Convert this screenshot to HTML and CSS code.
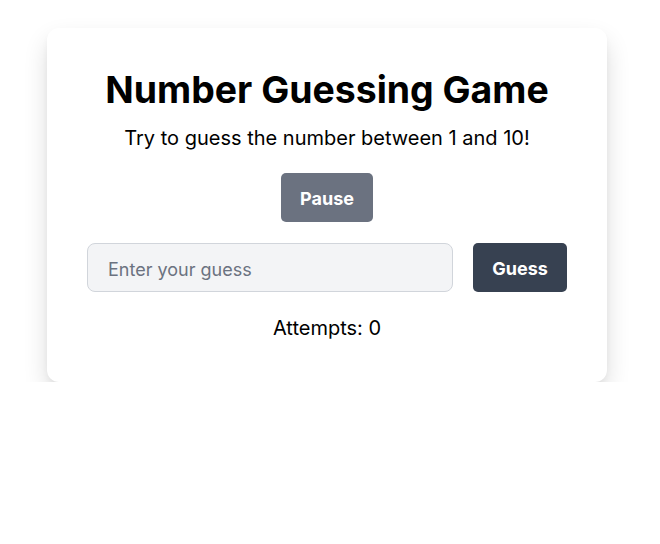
FILE: index.html
```html
<!DOCTYPE html>
<html lang="en">
<head>
<meta charset="utf-8">
<title>Number Guessing Game</title>
<link rel="stylesheet" href="styles.css">
</head>
<body>
  <main class="card">
    <h1 class="title">Number Guessing Game</h1>
    <p class="subtitle">Try to guess the number between 1 and 10!</p>
    <button class="btn btn-pause" type="button">Pause</button>
    <div class="row">
      <input class="guess-input" type="number" placeholder="Enter your guess">
      <button class="btn btn-guess" type="button">Guess</button>
    </div>
    <p class="attempts">Attempts: 0</p>
  </main>
</body>
</html>
```
FILE: styles.css
```css
* { box-sizing: border-box; }
html, body { margin: 0; padding: 0; background: #ffffff; }
body {
  font-family: Inter, "Noto Sans", "Liberation Sans", sans-serif;
  color: #000;
  padding-top: 28px;
}
.card {
  width: 560px;
  margin-left: 47px;
  background: #fff;
  border-radius: 12px;
  padding: 40px;
  box-shadow: 0 12px 26px -2px rgba(0,0,0,0.16), 0 4px 10px -4px rgba(0,0,0,0.1);
  display: flex;
  flex-direction: column;
  align-items: center;
}
.title {
  margin: 2px 0 14px;
  font-size: 37.4px;
  line-height: 40px;
  font-weight: 700;
  letter-spacing: 0;
}
.subtitle {
  margin: 0 0 21px;
  font-size: 20px;
  line-height: 28px;
}
.btn {
  font-family: inherit;
  font-weight: 700;
  font-size: 18px;
  line-height: 25px;
  color: #fff;
  border: none;
  border-radius: 5px;
  padding: 13px 0 11px;
  cursor: pointer;
  text-align: center;
}
.btn-pause {
  background: #6b7280;
  margin-bottom: 21px;
  width: 92px;
}
.row {
  display: flex;
  gap: 20px;
  width: 100%;
}
.guess-input {
  flex: 1;
  height: 49px;
  font-family: inherit;
  font-size: 18px;
  padding: 3px 20px 0;
  background: #f3f4f6;
  border: 1px solid #d1d5db;
  border-radius: 8px;
  color: #111827;
  outline: none;
}
.guess-input::placeholder { color: #6b7280; }
.guess-input::-webkit-outer-spin-button,
.guess-input::-webkit-inner-spin-button { -webkit-appearance: none; margin: 0; }
.btn-guess {
  background: #374151;
  width: 94px;
  height: 49px;
}
.attempts {
  margin: 22px 0 0;
  font-size: 20px;
  line-height: 28px;
}
```
